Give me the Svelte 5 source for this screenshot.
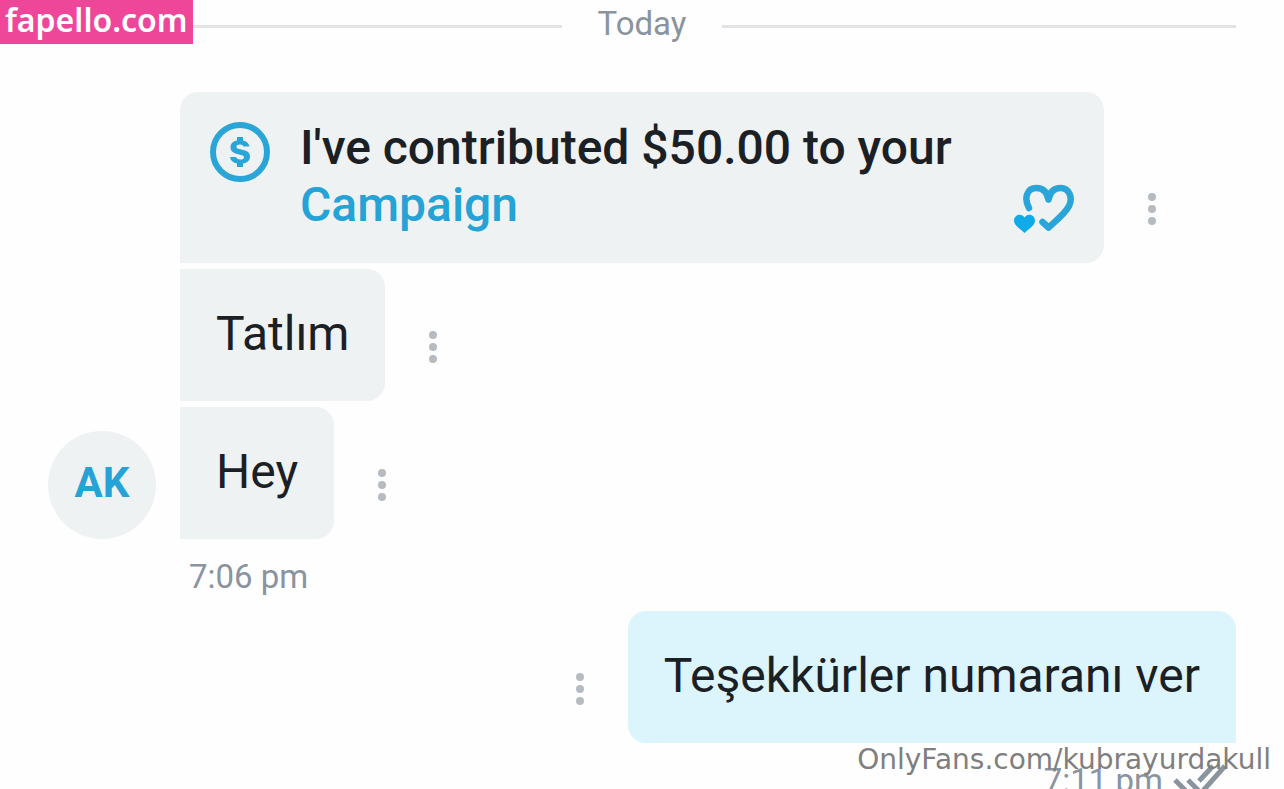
<script>
  const incoming = ['Tatlım', 'Hey'];
</script>

{#snippet menu()}
  <button class="menu" aria-label="Message options">
    <svg viewBox="0 0 48 48" aria-hidden="true">
      <circle cx="24" cy="12" r="4" />
      <circle cx="24" cy="24" r="4" />
      <circle cx="24" cy="36" r="4" />
    </svg>
  </button>
{/snippet}

<main class="chat">
  <div class="day"><span>Today</span></div>

  <section class="group">
    <div class="avatar">AK</div>
    <div class="stack">
      <div class="row">
        <article class="bubble tip">
          <svg class="coin" viewBox="0 0 60 60" aria-hidden="true">
            <circle cx="30" cy="30" r="27" fill="none" stroke="currentColor" stroke-width="6" />
            <path
              d="M27 15h6v3.500c3.500.6 5.800 2.700 6.500 6h-6c-.5-1.300-1.700-2-3.500-2-2.200 0-3.600.9-3.600 2.300 0 1.500 1.500 2 5 2.700 5.200 1 8.600 2.800 8.600 7.200 0 3.700-2.700 6.100-7 6.800V45h-6v-3.500c-4-.6-6.500-2.900-7-6.500h6c.5 1.600 1.900 2.500 4.200 2.500 2.400 0 3.800-.9 3.800-2.300 0-1.600-1.600-2.100-5-2.800-5.200-1.100-8.500-2.700-8.500-7.200 0-3.500 2.500-6 6.500-6.700Z"
              fill="currentColor"
            />
          </svg>
          <p>I've contributed $50.00 to your<br /><a href="#campaign">Campaign</a></p>
          <svg class="hearts" viewBox="0 0 62 50" aria-hidden="true">
            <path
              d="M17 25C11.500 15 15 5 24.500 5c6.500 0 10.500 4 12 11.500C38 9 42 5 48.500 5 57.500 5 61 15 57 23 53.500 30 46 36 36.500 44.500L30.500 39"
              fill="none" stroke="currentColor" stroke-width="6.500" stroke-linecap="round" stroke-linejoin="round"
            />
            <path
              class="small"
              d="M12.500 50C8 45.500 2 42.500 2 37.500 2 31.500 9.500 29.500 12.500 34.500 15.500 29.500 23 31.500 23 37.500 23 42.500 17 45.500 12.500 50Z"
            />
          </svg>
        </article>
        {@render menu()}
      </div>
      {#each incoming as text}
        <div class="row">
          <article class="bubble"><p>{text}</p></article>
          {@render menu()}
        </div>
      {/each}
      
    </div>
  </section>
  <div class="meta received"><time>7:06 pm</time></div>

  <section class="row sent">
    {@render menu()}
    <article class="bubble"><p>Teşekkürler numaranı ver</p></article>
  </section>
  <div class="meta delivered">
    <time>7:11 pm</time>
    <svg viewBox="0 0 54 36" role="img" aria-label="Read">
      <path d="M2 17L15 30M15 17L28 30L52 3M26 18L40 3" fill="none" stroke="currentColor" stroke-width="5" />
    </svg>
  </div>

  <div class="site">fapello.com</div>
  <div class="credit">OnlyFans.com/kubrayurdakull</div>
</main>

<style>
  :global(body) {
    margin: 0;
    background: #fefefe;
  }
  .chat {
    position: relative;
    box-sizing: border-box;
    height: 100vh;
    overflow: hidden;
    padding: 0 48px;
    font-family: Roboto, 'Liberation Sans', sans-serif;
    font-size: 48px;
    line-height: 57px;
    color: #1b2024;
  }
  p {
    margin: 0;
  }
  .day {
    display: flex;
    align-items: center;
    gap: 36px;
    height: 52px;
    margin-bottom: 40px;
    font-size: 33px;
    line-height: 48px;
    color: #8a949e;
  }
  .day span {
    padding-bottom: 4px;
  }
  .day::before,
  .day::after {
    content: '';
    flex: 1;
    height: 3px;
    background: #e2e3e7;
  }
  .group {
    display: flex;
    align-items: flex-end;
    gap: 24px;
  }
  .avatar {
    flex: none;
    width: 108px;
    height: 108px;
    border-radius: 50%;
    background: #eff2f3;
    color: #25a2d6;
    font-size: 42px;
    font-weight: 700;
    line-height: 104px;
    text-align: center;
  }
  .stack {
    flex: 1;
    display: flex;
    flex-direction: column;
    gap: 6px;
  }
  .row {
    display: flex;
    align-items: flex-end;
    gap: 24px;
  }
  .bubble {
    box-sizing: border-box;
    padding: 36px 36px 39px;
    border-radius: 0 18px 18px 0;
    background: #eff2f3;
  }
  .tip {
    flex: 0 1 924px;
    display: flex;
    gap: 30px;
    padding: 27px 30px 30px;
    border-radius: 18px 18px 18px 0;
    font-weight: 500;
  }
  .tip p {
    flex: 1;
  }
  .tip a {
    color: #25a2d6;
    text-decoration: none;
  }
  .coin {
    flex: none;
    width: 60px;
    height: 60px;
    margin-top: 3px;
    color: #29a5d8;
  }
  .hearts {
    flex: none;
    align-self: flex-end;
    width: 62px;
    height: 50px;
    color: #29a5d8;
  }
  .small {
    fill: #0faaea;
  }
  .menu {
    flex: none;
    display: flex;
    align-items: center;
    width: 48px;
    height: 108px;
    padding: 0;
    border: 0;
    background: none;
    cursor: pointer;
  }
  .menu svg {
    width: 48px;
    height: 48px;
    fill: #b5bbc0;
  }
  .meta {
    display: flex;
    align-items: center;
    gap: 10px;
    padding: 14px 9px 10px;
    font-size: 33px;
    line-height: 48px;
    color: #8a949e;
  }
  .received {
    padding-left: 141px;
  }
  .sent {
    justify-content: flex-end;
  }
  .sent .bubble {
    border-radius: 18px 18px 0 18px;
    background: #dcf4fc;
  }
  .delivered {
    justify-content: flex-end;
  }
  .delivered svg {
    width: 54px;
    height: 36px;
  }
  .site {
    position: absolute;
    top: 0;
    left: 0;
    box-sizing: border-box;
    padding: 0 5px;
    height: 44px;
    background: #ee4799;
    color: #fff;
    font: 600 32px/40px 'Noto Sans', sans-serif;
    text-align: center;
  }
  .credit {
    position: absolute;
    right: 13px;
    bottom: 11px;
    color: #7f7f7f;
    font: 28px/36px 'DejaVu Sans', sans-serif;
  }
</style>
